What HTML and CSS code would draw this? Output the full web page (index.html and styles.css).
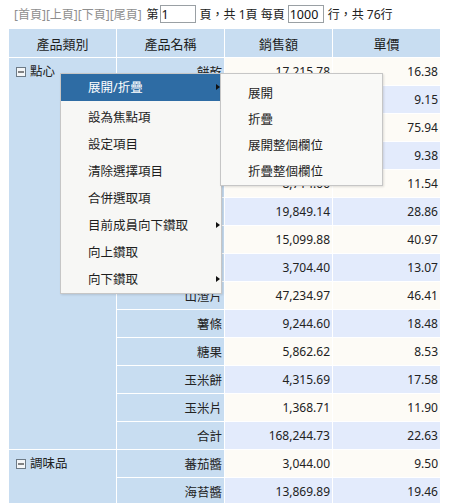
FILE: index.html
```html
<!DOCTYPE html>
<html lang="zh-Hant">
<head>
<meta charset="utf-8">
<title>樞紐分析</title>
<link rel="stylesheet" href="styles.css">
</head>
<body>
<div class="pager">
  <span class="links">[首頁][上頁][下頁][尾頁]</span>
  <span class="lbl-first">第</span>
  <input class="page-input" type="text" value="1">
  <span class="lbl-mid">頁，共 1頁 每頁</span>
  <input class="page-input rows" type="text" value="1000">
  <span class="lbl-end">行，共 76行</span>
</div>
<div class="wrap">
  <table class="pivot">
    <colgroup><col class="c"><col class="c"><col class="c"><col class="c"></colgroup>
    <thead>
      <tr><th>產品類別</th><th>產品名稱</th><th>銷售額</th><th>單價</th></tr>
    </thead>
    <tbody>
      <tr class="odd"><td class="cat" rowspan="14"><span class="tog"><svg width="10" height="10" viewBox="0 0 10 10"><rect x="0.5" y="0.5" width="9" height="9" fill="#f4f6f8" stroke="#6d7a86"/><line x1="2" y1="5" x2="8" y2="5" stroke="#111" stroke-width="1"/></svg></span>點心</td><td class="name">餅乾</td><td class="num">17,215.78</td><td class="num">16.38</td></tr>
      <tr class="even"><td class="name">巧克力</td><td class="num">7,234.50</td><td class="num">9.15</td></tr>
      <tr class="odd"><td class="name">牛肉乾</td><td class="num">21,480.00</td><td class="num">75.94</td></tr>
      <tr class="even"><td class="name">花生</td><td class="num">6,920.44</td><td class="num">9.38</td></tr>
      <tr class="odd"><td class="name">燕麥片</td><td class="num">8,714.00</td><td class="num">11.54</td></tr>
      <tr class="even"><td class="name">蘇打餅</td><td class="num">19,849.14</td><td class="num">28.86</td></tr>
      <tr class="odd"><td class="name">桂花糕</td><td class="num">15,099.88</td><td class="num">40.97</td></tr>
      <tr class="even"><td class="name">棉花糖</td><td class="num">3,704.40</td><td class="num">13.07</td></tr>
      <tr class="odd"><td class="name">山渣片</td><td class="num">47,234.97</td><td class="num">46.41</td></tr>
      <tr class="even"><td class="name">薯條</td><td class="num">9,244.60</td><td class="num">18.48</td></tr>
      <tr class="odd"><td class="name">糖果</td><td class="num">5,862.62</td><td class="num">8.53</td></tr>
      <tr class="even"><td class="name">玉米餅</td><td class="num">4,315.69</td><td class="num">17.58</td></tr>
      <tr class="odd"><td class="name">玉米片</td><td class="num">1,368.71</td><td class="num">11.90</td></tr>
      <tr class="even"><td class="name">合計</td><td class="num">168,244.73</td><td class="num">22.63</td></tr>
      <tr class="odd"><td class="cat" rowspan="3"><span class="tog"><svg width="10" height="10" viewBox="0 0 10 10"><rect x="0.5" y="0.5" width="9" height="9" fill="#f4f6f8" stroke="#6d7a86"/><line x1="2" y1="5" x2="8" y2="5" stroke="#111" stroke-width="1"/></svg></span>調味品</td><td class="name">蕃茄醬</td><td class="num">3,044.00</td><td class="num">9.50</td></tr>
      <tr class="even"><td class="name">海苔醬</td><td class="num">13,869.89</td><td class="num">19.46</td></tr>
      <tr class="odd"><td class="name">醬油</td><td class="num">6,210.30</td><td class="num">15.20</td></tr>
    </tbody>
  </table>
</div>

<div class="menu main-menu">
  <div class="item active sub">展開/折疊</div>
  <div class="item">設為焦點項</div>
  <div class="item">設定項目</div>
  <div class="item">清除選擇項目</div>
  <div class="item">合併選取項</div>
  <div class="item sub">目前成員向下鑽取</div>
  <div class="item">向上鑽取</div>
  <div class="item sub">向下鑽取</div>
</div>
<div class="menu sub-menu">
  <div class="item small">展開</div>
  <div class="item small">折疊</div>
  <div class="item small">展開整個欄位</div>
  <div class="item small">折疊整個欄位</div>
</div>
</body>
</html>
```
FILE: styles.css
```css
html, body {
  margin: 0;
  padding: 0;
  background: #ffffff;
}
body {
  font-family: "Noto Sans", "Noto Sans CJK TC", sans-serif;
  font-size: 12px;
  color: #222222;
  position: relative;
}
.pager {
  height: 28px;
  display: flex;
  align-items: center;
  padding-left: 14px;
  white-space: nowrap;
}
.links { color: #8e8e8e; }
.lbl-first { margin-left: 5px; }
.lbl-mid { margin-left: 4px; }
.lbl-end { margin-left: 4px; }
.page-input {
  box-sizing: border-box;
  width: 36px;
  height: 18px;
  margin: 0 0 0 1px;
  padding: 0 1px;
  border: 1px solid #9aa0a4;
  font-family: "Noto Sans", sans-serif;
  font-size: 12.5px;
  color: #111;
  background: #fff;
  outline: none;
}
.page-input.rows { margin-left: 3px; }
.wrap { padding: 0 8px; }
.pivot {
  table-layout: fixed;
  width: 433px;
  border-collapse: separate;
  border-spacing: 1px;
  background: #ffffff;
}
.pivot col.c { width: 107px; }
.pivot th {
  height: 28px;
  padding: 0;
  background: #c8ddf1;
  font-weight: normal;
  font-size: 13px;
  color: #1d1d1d;
  text-align: center;
}
.pivot td {
  height: 27px;
  padding: 0 2px;
  white-space: nowrap;
  overflow: hidden;
}
.pivot td.cat {
  background: #c8ddf1;
  vertical-align: top;
  padding: 3px 0 0 7px;
  font-size: 12.5px;
}
.tog {
  display: inline-block;
  width: 10px;
  height: 10px;
  margin-right: 4px;
  vertical-align: -1px;
}
.tog svg { display: block; }
.pivot td.name {
  background: #c8ddf1;
  text-align: right;
  font-size: 12.5px;
}
.pivot td.num {
  text-align: right;
  font-size: 12px;
}
.pivot tr.odd td.num { background: #fdfbf6; }
.pivot tr.even td.num { background: #e3ebfc; }

.menu {
  position: absolute;
  background: #f7f7f5;
  border: 1px solid #c6c6c6;
  box-shadow: 1px 1px 2px rgba(0, 0, 0, 0.12);
  font-size: 12.5px;
  color: #1e1e1e;
}
.main-menu {
  left: 60px;
  top: 73px;
  width: 160px;
}
.sub-menu {
  left: 220px;
  top: 73px;
  width: 161px;
  padding-top: 7px;
  background: #f9f9f7;
}
.item {
  position: relative;
  height: 27px;
  line-height: 27px;
  padding-left: 27px;
  white-space: nowrap;
}
.item.active {
  background: #2e6ca4;
  color: #ffffff;
  margin-bottom: 3px;
}
.item.small { height: 26px; line-height: 26px; }
.item.sub::after {
  content: "";
  position: absolute;
  right: 1px;
  top: 10px;
  border-left: 4px solid #111;
  border-top: 3.5px solid transparent;
  border-bottom: 3.5px solid transparent;
}
```
